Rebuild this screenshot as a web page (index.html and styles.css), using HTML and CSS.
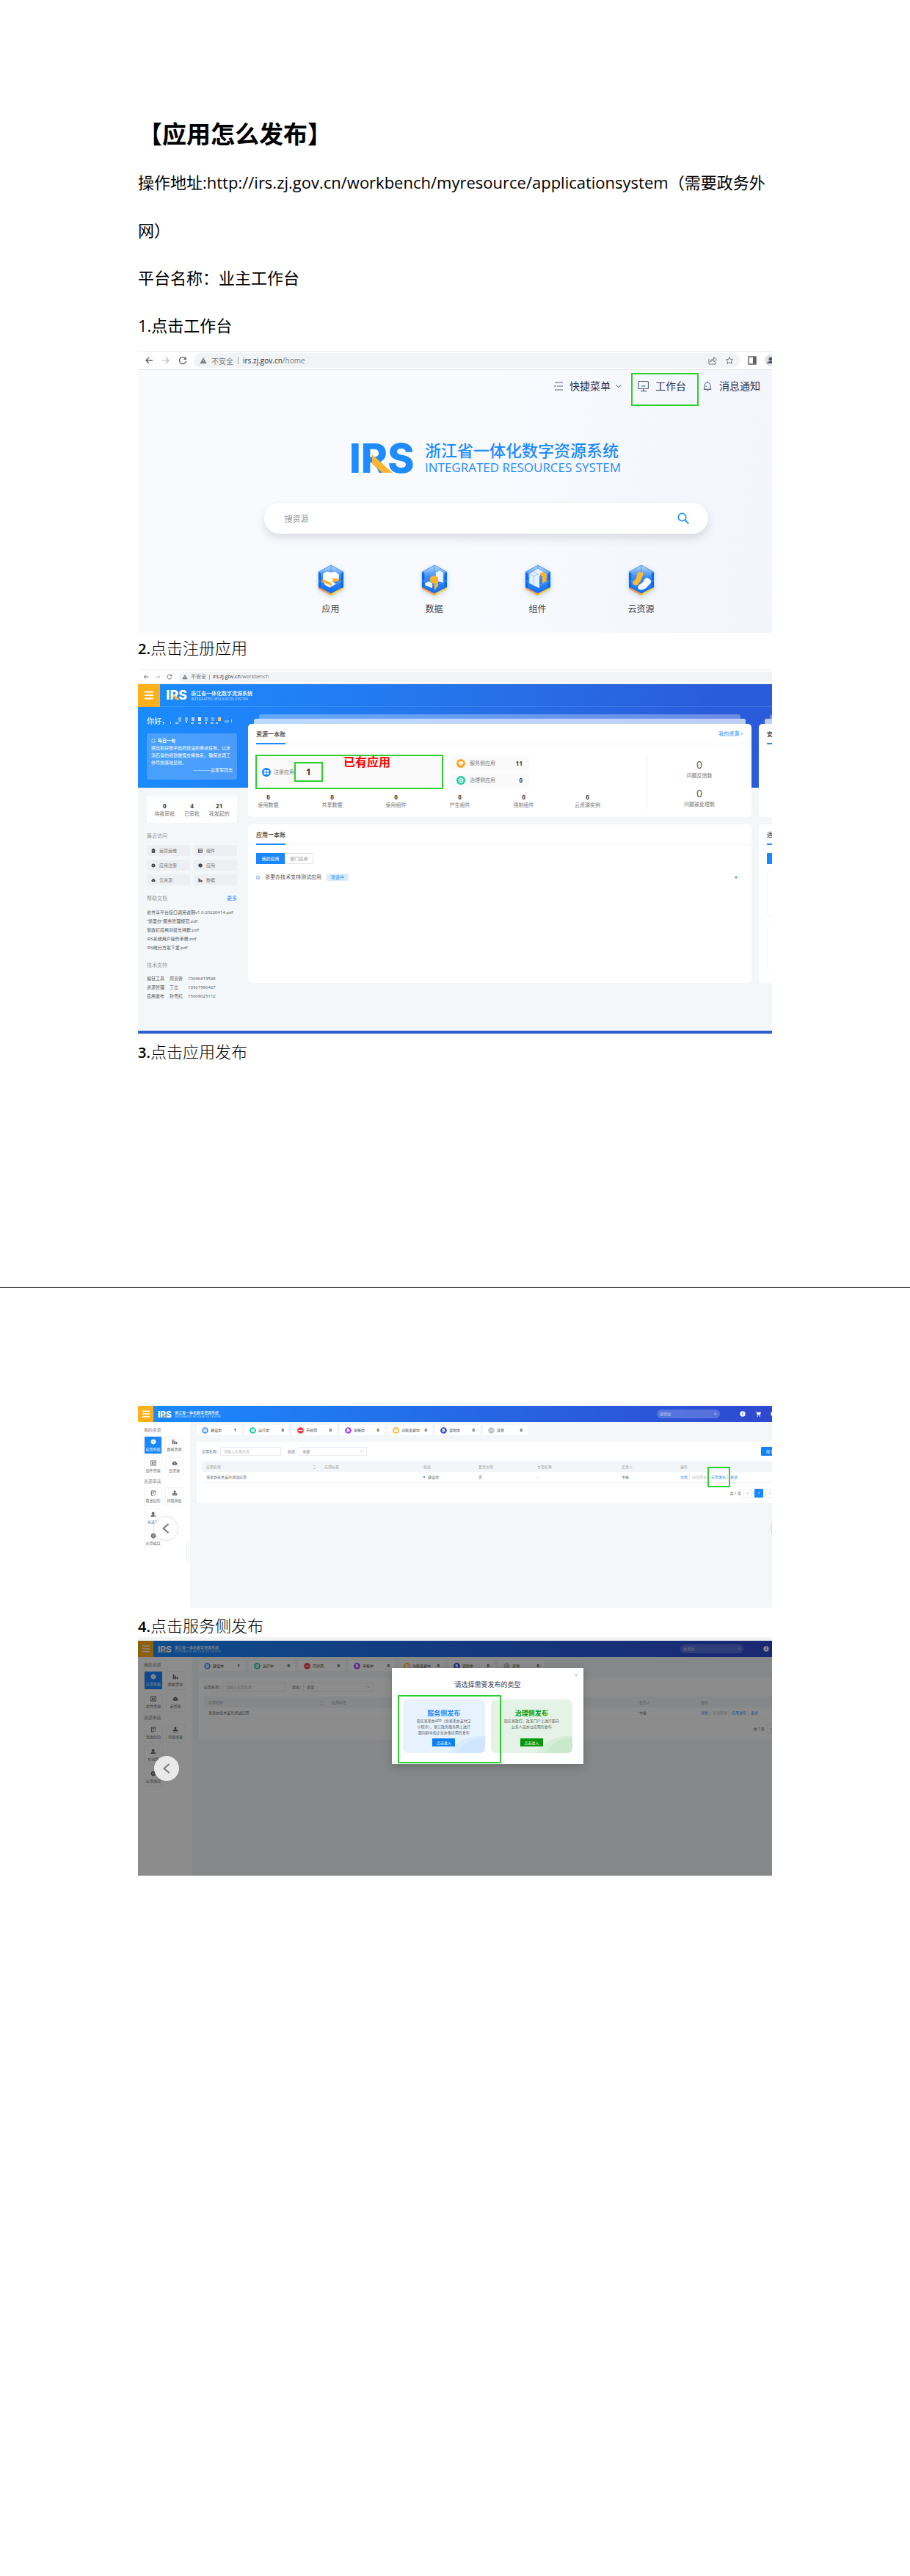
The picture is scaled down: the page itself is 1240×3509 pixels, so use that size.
FILE: index.html
```html
<!DOCTYPE html>
<html lang="zh-CN">
<head>
<meta charset="utf-8">
<title>应用怎么发布</title>
<link rel="stylesheet" href="styles.css">
</head>
<body>
<svg class="defs" aria-hidden="true">
  <symbol id="irs" viewBox="0 0 90 42">
    <text x="-2" y="41" font-family="Inter, sans-serif" font-weight="800" font-size="55" fill="currentColor">IRS</text>
    <path d="M29 16L57 41H43L29 29Z" fill="#ffb52e"/>
  </symbol>
  <symbol id="back" viewBox="0 0 12 12"><path d="M11 6H2M6 2L2 6l4 4" fill="none" stroke="currentColor" stroke-width="1.4"/></symbol>
  <symbol id="fwd" viewBox="0 0 12 12"><path d="M1 6h9M6 2l4 4-4 4" fill="none" stroke="currentColor" stroke-width="1.2"/></symbol>
  <symbol id="reload" viewBox="0 0 12 12"><path d="M10 3.5A4.6 4.6 0 1 0 10.6 7" fill="none" stroke="currentColor" stroke-width="1.4"/><path d="M11 1v4H7z" fill="currentColor"/></symbol>
  <symbol id="warn" viewBox="0 0 12 12"><path d="M6 1l5.5 10H.5z" fill="currentColor"/><path d="M6 4.5v3M6 8.6v1" stroke="#fff"/></symbol>
  <symbol id="search" viewBox="0 0 16 16"><circle cx="6.5" cy="6.5" r="5.2" fill="none" stroke="currentColor" stroke-width="1.6"/><path d="M10.4 10.4L15.4 15.4" stroke="currentColor" stroke-width="1.8"/></symbol>
  <symbol id="burger" viewBox="0 0 12 12"><path d="M0 1.5h12M0 6h12M0 10.500h12" stroke="#fff" stroke-width="1.800"/></symbol>
  <symbol id="cube" viewBox="0 0 12 12"><path d="M6 .5l5 2.6v5.600L6 11.500 1 8.700V3.100z" fill="currentColor"/><path d="M2.500 4L6 6l3.500-2M6 6v4" fill="none" stroke="#9bb" stroke-width=".9"/></symbol>
  <symbol id="bars" viewBox="0 0 12 12"><path d="M1 1h2.600v10H1zM4.700 4h2.600v7H4.700zM8.400 6H11v5H8.400z" fill="currentColor"/></symbol>
  <symbol id="comp" viewBox="0 0 12 12"><rect x="1" y="1.500" width="10" height="9" fill="none" stroke="currentColor" stroke-width="1.400"/><path d="M3 4h2.500v4.500H3zM7 4h2v2H7zM7 7h2v1.500H7z" fill="currentColor"/></symbol>
  <symbol id="cloud" viewBox="0 0 12 12"><path d="M3 10a2.600 2.600 0 0 1-.4-5.100 3.500 3.500 0 0 1 6.800 0A2.600 2.600 0 0 1 9 10z" fill="currentColor"/><path d="M6 5.500v3M4.800 7L6 5.500 7.200 7" fill="none" stroke="#fff" stroke-width=".8"/></symbol>
  <symbol id="note" viewBox="0 0 12 12"><path d="M10 6V1.500H2v9h4" fill="none" stroke="currentColor" stroke-width="1.500"/><path d="M4 4h4M4 6.500h3M6.500 9l1.500 1.500L11 7" fill="none" stroke="currentColor" stroke-width="1.200"/></symbol>
  <symbol id="stamp" viewBox="0 0 12 12"><path d="M6 .5a2.300 2.300 0 0 1 1.400 4V6.500H11V9H1V6.500h3.600v-2A2.300 2.300 0 0 1 6 .5zM1 10h10v1.300H1z" fill="currentColor"/></symbol>
  <symbol id="user" viewBox="0 0 12 12"><circle cx="5.500" cy="3.500" r="2.800" fill="currentColor"/><path d="M.5 10.500C1 7.500 3 6.500 5.500 6.500c2 0 3 .7 3 1.500v2.500z" fill="currentColor"/><path d="M9 8.500h2.500M9 10.500h2.500" stroke="currentColor"/></symbol>
  <symbol id="gear" viewBox="0 0 12 12"><path d="M6 .5l4.800 2.800v5.400L6 11.500 1.200 8.700V3.300z" fill="currentColor"/><circle cx="6" cy="6" r="2" fill="none" stroke="#ddd"/></symbol>
  <symbol id="clip" viewBox="0 0 12 12"><path d="M1.500 1.500h9v10h-9z" fill="currentColor"/><path d="M4 0h4v2.500H4z" fill="currentColor"/><path d="M3.500 5h5M3.500 8h5" stroke="#eee"/></symbol>
  <symbol id="info" viewBox="0 0 12 12"><circle cx="6" cy="6" r="5.500" fill="#fff"/><path d="M6 5v4M6 2.600v1.400" stroke="#2b55d3" stroke-width="1.600"/></symbol>
  <symbol id="cart" viewBox="0 0 12 12"><path d="M0 1h2.500l.5 1.500h9L10.500 7.500H4L2 2z" fill="#fff"/><path d="M3.500 9h7" stroke="#fff"/><circle cx="4.800" cy="10.800" r="1" fill="#fff"/><circle cx="9.500" cy="10.800" r="1" fill="#fff"/></symbol>
  <symbol id="left" viewBox="0 0 12 12"><path d="M9 .8L3 6l6 5.200" fill="none" stroke="currentColor" stroke-width="1.700"/></symbol>
  <symbol id="down" viewBox="0 0 12 12"><path d="M1 3.500l5 5 5-5" fill="none" stroke="currentColor" stroke-width="1.300"/></symbol>
  <symbol id="d-doc" viewBox="0 0 12 12"><circle cx="6" cy="6" r="5.800" fill="currentColor"/><rect x="3" y="3" width="6" height="6" rx="1" fill="#fff"/><path d="M4.300 5h3.400M4.300 7h3.400" stroke="currentColor" stroke-width=".7"/></symbol>
  <symbol id="d-minus" viewBox="0 0 12 12"><circle cx="6" cy="6" r="5.800" fill="currentColor"/><path d="M2.200 6h7.600" stroke="#fff" stroke-width="1.500"/></symbol>
  <symbol id="d-search" viewBox="0 0 12 12"><circle cx="6" cy="6" r="5.800" fill="currentColor"/><path d="M3.500 2.800h3.500l1.500 3v3h-5z" fill="#fff"/><path d="M5 5.500l3.500 3.500" stroke="currentColor"/></symbol>
  <symbol id="d-clock" viewBox="0 0 12 12"><circle cx="6" cy="6" r="5.800" fill="currentColor"/><circle cx="6" cy="6" r="3.500" fill="#fff"/><path d="M4.500 5L6 6.500 8 5" fill="none" stroke="currentColor"/></symbol>
  <symbol id="d-dots" viewBox="0 0 12 12"><circle cx="6" cy="6" r="5.800" fill="currentColor"/><path d="M2.800 6h1.400M5.300 6h1.400M7.800 6h1.400" stroke="#fff"/></symbol>
  <symbol id="d-grid" viewBox="0 0 12 12"><circle cx="6" cy="6" r="6" fill="currentColor"/><path d="M3.500 3h2v2.500h-3V4zM6.500 3h2l1 1v1.500h-3zM2.500 6.500h3V9h-2l-1-1zM6.500 6.500h3V8l-1 1h-2z" fill="#fff"/></symbol>
  <symbol id="d-heart" viewBox="0 0 12 12"><circle cx="6" cy="6" r="6" fill="currentColor"/><path d="M6 9.300L2.800 6.200C2 4.500 3.300 2.900 4.700 3.200h2.600c1.400-.3 2.700 1.300 1.900 3z" fill="#fff"/><path d="M4.500 5.500L6 6.800l1.500-1.300" fill="none" stroke="currentColor" stroke-width=".7"/></symbol>
  <symbol id="d-gear" viewBox="0 0 12 12"><circle cx="6" cy="6" r="6" fill="currentColor"/><circle cx="6" cy="6" r="2.900" fill="none" stroke="#fff" stroke-width="1.200"/><path d="M6 3v6M3 6h6" stroke="#fff" stroke-width=".8"/></symbol>
  <linearGradient id="hexfill" x1="0" y1="0" x2="0" y2="1"><stop offset="0" stop-color="#b9d9fb"/><stop offset=".4" stop-color="#3f8ff5"/><stop offset="1" stop-color="#0f6cf5"/></linearGradient>
  <linearGradient id="hexbase" x1="0" x2="1"><stop offset=".4" stop-color="#ff9d3c"/><stop offset=".6" stop-color="#ffd02e"/></linearGradient>
  <symbol id="hex" viewBox="0 0 36 44">
    <path d="M.5 30v4L18 43.500 35.500 34v-4z" fill="url(#hexbase)"/>
    <path d="M18 1l17.500 9.500v21L18 40.500.5 31.500v-21z" fill="url(#hexfill)"/>
    <path d="M.5 10.500v21L4 33V12zM35.500 10.500v21L32 33V12z" fill="#0b68ef"/>
    <path d="M18 1v10M.5 10.500L18 1l17.500 9.500" fill="none" stroke="#4a96f3"/>
    <path d="M0 22l18 8 18-8" fill="none" stroke="#8bc0ff" stroke-width=".6"/>
  </symbol>
</svg>

<main>
<section class="sheet sheet-one">
  <h1>【应用怎么发布】</h1>
  <p>操作地址:http://irs.zj.gov.cn/workbench/myresource/applicationsystem（需要政务外网）</p>
  <p>平台名称：业主工作台</p>
  <p>1.点击工作台</p>

  <div class="shot home">
    <div class="bar">
      <svg class="i12"><use href="#back"/></svg>
      <svg class="i12 dim"><use href="#fwd"/></svg>
      <svg class="i12"><use href="#reload"/></svg>
      <div class="addr"><svg class="i10"><use href="#warn"/></svg><span>不安全</span><i></i><span><b>irs.zj.gov.cn</b>/home</span>
        <svg class="i12 share" viewBox="0 0 12 12"><path d="M1 4v7h9V8M3 8c0-3 2-4 5-4V1.500L11.500 5 8 8V6C6 6 4 6.500 3 8z" fill="none" stroke="currentColor"/></svg>
        <svg class="i12" viewBox="0 0 12 12"><path d="M6 1.300l1.400 3.200 3.500.3-2.600 2.300.8 3.400L6 8.700l-3.100 1.800.8-3.400L1.100 4.800l3.500-.3z" fill="none" stroke="currentColor"/></svg>
      </div>
      <svg class="i12" viewBox="0 0 12 12"><rect x="1" y="1" width="10" height="10" fill="none" stroke="currentColor" stroke-width="1.500"/><path d="M7 1h4v10H7z" fill="currentColor"/></svg>
      <svg class="i16 avatar" viewBox="0 0 16 16"><circle cx="8" cy="8" r="8" fill="#dfe2e8"/><circle cx="8" cy="6" r="2.500" fill="#4a5368"/><path d="M3 12c0-4 10-4 10 0z" fill="#4a5368"/></svg>
    </div>
    <div class="home-body">
      <nav class="home-nav">
        <a href="#"><svg class="i12" viewBox="0 0 12 12"><path d="M1 1h11M4 6h8M1 11h11" stroke="#5b6389" fill="none"/><path d="M0 6h3" stroke="#1e8bff" stroke-width="1.300"/></svg>快捷菜单<svg class="i8 more"><use href="#down"/></svg></a>
        <a href="#" class="marked"><svg class="i16" viewBox="0 0 16 16"><rect x="1" y="1.500" width="13.500" height="10" rx="1" fill="none" stroke="#5b6389" stroke-width="1.200"/><path d="M5 8h5.500" stroke="#1e8bff" stroke-width="1.300"/><path d="M8 11.500v3M4 14.700h8" stroke="#5b6389" stroke-width="1.200"/></svg>工作台</a>
        <a href="#"><svg class="i14" viewBox="0 0 14 16"><path d="M1 13h12M2.500 13V7a4.500 4.500 0 0 1 9 0v6M7 2.500V.5M5.500 15.200h3" fill="none" stroke="#5b6389" stroke-width="1.200"/><path d="M5 9V7" stroke="#1e8bff" stroke-width="1.300"/></svg>消息通知</a>
      </nav>
      <div class="home-center">
      <div class="brand">
        <svg class="brand-mark"><use href="#irs"/></svg>
        <div><strong>浙江省一体化数字资源系统</strong><span>INTEGRATED RESOURCES SYSTEM</span></div>
      </div>
      <form class="home-search"><input type="text" aria-label="搜资源" placeholder="搜资源"><button type="button" aria-label="搜索"><svg class="i16"><use href="#search"/></svg></button></form>
      <div class="hexes">
        <a href="#"><svg viewBox="0 0 36 44"><use href="#hex"/><path d="M7 13l5-3 6 1 6-1 5 4v7l-8 3 4 3-9 5-7-4-2-7z" fill="#fff"/><path d="M6 20l13 6v4L6 24zM20 19l9 1v3l-9 2z" fill="#ffb32b"/></svg>应用</a>
        <a href="#"><svg viewBox="0 0 36 44"><use href="#hex"/><path d="M20 11l5-2.500 5 2.500v14l-10-2zM5 26l5-2.500 5 2.500v7l-10-4z" fill="#eaf4ff"/><path d="M12 18l5.500-3 5.500 3v12l-5 6v-9l-6-3z" fill="#ffb32b"/></svg>数据</a>
        <a href="#"><svg viewBox="0 0 36 44"><use href="#hex"/><path d="M6 13l12-7 7 4-5 6v17l-14-7z" fill="#e6f1ff"/><path d="M12 10l7 4M12 16v14M6 13l7 3 6-3" stroke="#9cc8fb" fill="none"/><path d="M20 13l5-3 5 3v10l-6 3v-9z" fill="#ffb32b"/></svg>组件</a>
        <a href="#"><svg viewBox="0 0 36 44"><use href="#hex"/><path d="M6 27c0-6 4-4 5-9 1-7 4-9 6-7 4-2 4 3 2 7-2 3-1 5-4 7-2 5-6 5-9 2z" fill="#ffb82f"/><path d="M13 32c0-4 6-5 8-9 2-5 6-6 7-3 5 1 4 6 1 8-4 4-6 7-10 7-3 1-6-1-6-3z" fill="#f6faff"/></svg>云资源</a>
      </div>
      </div>
    </div>
  </div>

  <h2 class="near"><b>2.</b>点击注册应用</h2>

  <div class="shot bench">
    <div class="bar small">
      <svg class="i8"><use href="#back"/></svg>
      <svg class="i8 dim"><use href="#fwd"/></svg>
      <svg class="i8"><use href="#reload"/></svg>
      <div class="addr"><svg class="i8"><use href="#warn"/></svg><span>不安全</span><i></i><span><b>irs.zj.gov.cn</b>/workbench</span></div>
    </div>
    <div class="bench-body">
      <header class="bench-head"><button type="button" aria-label="菜单"><svg class="i12"><use href="#burger"/></svg></button>
        <svg class="mark"><use href="#irs"/></svg><div class="head-name"><strong>浙江省一体化数字资源系统</strong><span>INTEGRATED RESOURCES SYSTEM</span></div></header>
      <div class="bench-cols">
        <aside>
          <div class="hello">你好，
            <svg viewBox="0 0 88 12"><g fill="#a9d0fd"><path d="M2 7h1v3H2zM9 8h4v2H9zM23 6h2v3h-2zM30 8h4v2h-4zM40 8h4v2h-4zM50 7h2v3h-2zM57 8h4v2h-4zM64 8h3v2h-3zM85 4h1v4h-1z"/></g><path d="M13 1h4v6h-4zM22 1h4v5h-4zM49 1h4v5h-4z" fill="#7db8fb"/><path d="M31 1h4v5h-4z" fill="#c8bcf5"/><path d="M40 1h4v5h-4z" fill="#dceffd"/><path d="M58 1h4v5h-4z" fill="#7ba3f5"/><path d="M67 1h4v5h-4z" fill="#d6c88a"/><path d="M76 5h6v4h-6z" fill="#5aa7fb"/></svg></div>
          <div class="quote"><h4><svg class="i6" viewBox="0 0 12 12"><path d="M1 6c1 6 9 6 10 0M3 1v3M9 1v3" fill="none" stroke="#fff" stroke-width="1.500"/></svg>每日一句</h4>
            <p>突出抓好数字政府建设的重点任务、以水滴石穿的韧劲做强支撑体系，确保这项工作尽快落地见效。</p><p class="by">————袁家军同志</p></div>
          <div class="trio"><div><b>0</b>待我审批</div><div><b>4</b>已审批</div><div><b>21</b>我发起的</div></div>
          <h3>最近访问</h3>
          <div class="recent">
            <a href="#"><svg class="i6"><use href="#clip"/></svg>运营运维</a><a href="#"><svg class="i6"><use href="#comp"/></svg>组件</a>
            <a href="#"><svg class="i6"><use href="#gear"/></svg>应用注册</a><a href="#"><svg class="i6"><use href="#cube"/></svg>应用</a>
            <a href="#"><svg class="i6"><use href="#cloud"/></svg>云资源</a><a href="#"><svg class="i6"><use href="#bars"/></svg>数据</a>
          </div>
          <h3>帮助文档<a href="#">更多</a></h3>
          <ul><li>省共享平台接口调用说明v1.0-20220414.pdf</li><li>“浙里办”服务管理规范.pdf</li><li>浙政钉应用对接支持群.pdf</li><li>IRS系统用户操作手册.pdf</li><li>IRS统分方案下发.pdf</li></ul>
          <h3>技术支持</h3>
          <table class="people"><tr><td>编目工具</td><td>周壹锋</td><td>13646614528</td></tr><tr><td>资源管理</td><td>丁立</td><td>13567586427</td></tr><tr><td>应用发布</td><td>孙雪红</td><td>15669025112</td></tr></table>
        </aside>
        <div class="ledger">
          <section class="card assets stacked">
            <div class="card-head"><h3>资源一本账</h3><a href="#">我的资源 &gt;</a></div>
            <div class="assets-body">
              <div class="assets-main">
                <div class="tops">
                  <div class="reg"><svg class="i12 c-blue"><use href="#d-grid"/></svg>注册应用<span class="one">1</span><strong class="callout">已有应用</strong></div>
                  <div class="sides"><div><svg class="i12 c-orange"><use href="#d-heart"/></svg>服务侧应用<b>11</b></div><div><svg class="i12 c-green"><use href="#d-gear"/></svg>治理侧应用<b>0</b></div></div>
                </div>
                <div class="counts"><div><b>0</b>使用数据</div><div><b>0</b>共享数据</div><div><b>0</b>使用组件</div><div><b>0</b>产生组件</div><div><b>0</b>强制组件</div><div><b>0</b>云资源实例</div></div>
              </div>
              <div class="issues"><div><b>0</b>问题反馈数</div><div><b>0</b>问题被处理数</div></div>
            </div>
          </section>
          <section class="card apps">
            <div class="card-head"><h3>应用一本账</h3></div>
            <div class="tabs"><button type="button" class="on">我的应用</button><button type="button">部门应用</button></div>
            <div class="app-row"><i class="ring"></i>浙里办技术支持测试应用<span class="tag">建设中</span><i class="caret"></i></div>
          </section>
        </div>
        <div class="ledger edge">
          <section class="card assets stacked"><div class="card-head"><h3>安全</h3></div></section>
          <section class="card apps"><div class="card-head"><h3>运维</h3></div><div class="tabs"><button type="button" class="on" aria-label="运维"></button></div><div class="ghost"></div><div class="ghost"></div></section>
        </div>
      </div>
    </div>
  </div>

  <h2><b>3.</b>点击应用发布</h2>
</section>

<section class="sheet sheet-two">
  <div class="shot sys">
    <div class="strip"></div>
    <header class="sys-head"><button type="button" aria-label="菜单"><svg class="i10"><use href="#burger"/></svg></button>
      <svg class="mark"><use href="#irs"/></svg><div class="head-name"><strong>浙江省一体化数字资源系统</strong><span>INTEGRATED RESOURCES SYSTEM</span></div>
      <div class="pill"><input type="text" aria-label="搜资源" placeholder="搜资源"><svg class="i4"><use href="#search"/></svg></div>
      <div class="tools"><svg class="i8"><use href="#info"/></svg><svg class="i8"><use href="#cart"/></svg><svg class="i8"><use href="#info"/></svg></div></header>
    <div class="sys-body">
      <aside>
        <h3>我的资源</h3>
        <div class="tiles"><a href="#" class="on"><svg class="i8"><use href="#cube"/></svg>应用系统</a><a href="#"><svg class="i8"><use href="#bars"/></svg>数据资源</a><a href="#"><svg class="i8"><use href="#comp"/></svg>组件资源</a><a href="#"><svg class="i8"><use href="#cloud"/></svg>云资源</a></div>
        <h3>资源申请</h3>
        <div class="tiles"><a href="#"><svg class="i8"><use href="#note"/></svg>我发起的</a><a href="#"><svg class="i8"><use href="#stamp"/></svg>待我审批</a><a href="#" class="solo"><svg class="i8"><use href="#user"/></svg>抄送我</a><a href="#" class="solo"><svg class="i8"><use href="#gear"/></svg>应用编目</a></div>
        <button type="button" class="fold" aria-label="收起"></button>
      </aside>
      <div class="sys-main">
        <div class="chips">
          <div><svg class="dot c-sky"><use href="#d-doc"/></svg>建设中<b>1</b></div><div><svg class="dot c-green"><use href="#d-doc"/></svg>运行中<b>0</b></div><div><svg class="dot c-red"><use href="#d-minus"/></svg>已停用<b>0</b></div><div><svg class="dot c-purple"><use href="#d-search"/></svg>申报中<b>0</b></div><div><svg class="dot c-amber"><use href="#d-clock"/></svg>功能变更中<b>0</b></div><div><svg class="dot c-navy"><use href="#d-search"/></svg>谋划中<b>0</b></div><div><svg class="dot c-grey"><use href="#d-dots"/></svg>其他<b>0</b></div>
        </div>
        <div class="panel">
          <form class="filters"><label for="n1">应用名称：</label><input id="n1" type="text" placeholder="请输入应用名称"><label for="s1">状态：</label><span class="sel"><select id="s1"><option>全部</option></select><svg class="i4"><use href="#down"/></svg></span><button type="button">搜 索</button></form>
          <table>
            <thead><tr><th class="k1">应用名称<i class="sort"></i></th><th class="k2">应用标签</th><th class="k3">状态</th><th class="k4">是否立项</th><th class="k5">立项名称</th><th class="k6">负责人</th><th>操作</th></tr></thead>
            <tbody><tr><td>浙里办技术支持测试应用</td><td></td><td><i class="bullet"></i>建设中</td><td>否</td><td>-</td><td>卞振</td><td><span class="ops"><a href="#">详情</a><span>申请资源</span><a href="#" class="marked">应用发布</a><a href="#">更多</a></span></td></tr></tbody>
          </table>
          <div class="pager"><span>共 1 条</span><button type="button">&lt;</button><button type="button" class="on">1</button><button type="button">&gt;</button></div>
        </div>
      </div>
    </div>
    <button type="button" class="prev" aria-label="上一张"><svg class="i14"><use href="#left"/></svg></button>
    <span class="next-edge"></span>
  </div>

  <h2><b>4.</b>点击服务侧发布</h2>

  <div class="shot sys large">
    <div class="strip"></div>
    <header class="sys-head"><button type="button" aria-label="菜单"><svg class="i10"><use href="#burger"/></svg></button>
      <svg class="mark"><use href="#irs"/></svg><div class="head-name"><strong>浙江省一体化数字资源系统</strong><span>INTEGRATED RESOURCES SYSTEM</span></div>
      <div class="pill"><input type="text" aria-label="搜资源" placeholder="搜资源"><svg class="i4"><use href="#search"/></svg></div>
      <div class="tools"><svg class="i8"><use href="#info"/></svg></div></header>
    <div class="sys-body">
      <aside>
        <h3>我的资源</h3>
        <div class="tiles"><a href="#" class="on"><svg class="i8"><use href="#cube"/></svg>应用系统</a><a href="#"><svg class="i8"><use href="#bars"/></svg>数据资源</a><a href="#"><svg class="i8"><use href="#comp"/></svg>组件资源</a><a href="#"><svg class="i8"><use href="#cloud"/></svg>云资源</a></div>
        <h3>资源申请</h3>
        <div class="tiles"><a href="#"><svg class="i8"><use href="#note"/></svg>我发起的</a><a href="#"><svg class="i8"><use href="#stamp"/></svg>待我审批</a><a href="#" class="solo"><svg class="i8"><use href="#user"/></svg>抄送我</a><a href="#" class="solo"><svg class="i8"><use href="#gear"/></svg>应用编目</a></div>
      </aside>
      <div class="sys-main">
        <div class="chips">
          <div><svg class="dot c-sky"><use href="#d-doc"/></svg>建设中<b>1</b></div><div><svg class="dot c-green"><use href="#d-doc"/></svg>运行中<b>0</b></div><div><svg class="dot c-red"><use href="#d-minus"/></svg>已停用<b>0</b></div><div><svg class="dot c-purple"><use href="#d-search"/></svg>申报中<b>0</b></div><div><svg class="dot c-amber"><use href="#d-clock"/></svg>功能变更中<b>0</b></div><div><svg class="dot c-navy"><use href="#d-search"/></svg>谋划中<b>0</b></div><div><svg class="dot c-grey"><use href="#d-dots"/></svg>其他<b>0</b></div>
        </div>
        <div class="panel">
          <form class="filters"><label for="n2">应用名称：</label><input id="n2" type="text" placeholder="请输入应用名称"><label for="s2">状态：</label><span class="sel"><select id="s2"><option>全部</option></select><svg class="i4"><use href="#down"/></svg></span></form>
          <table>
            <thead><tr><th class="k1">应用名称<i class="sort"></i></th><th class="k2">应用标签</th><th class="k3"></th><th class="k4"></th><th class="k5"></th><th class="k6">负责人</th><th>操作</th></tr></thead>
            <tbody><tr><td>浙里办技术支持测试应用</td><td></td><td></td><td></td><td></td><td>卞振</td><td><span class="ops"><a href="#">详情</a><span>申请资源</span><a href="#">应用发布</a><a href="#">更多</a></span></td></tr></tbody>
          </table>
          <div class="pager"><span>共 1 条</span><button type="button">&lt;</button></div>
        </div>
      </div>
    </div>
    <div class="mask"></div>
    <div class="modal" role="dialog" aria-label="请选择需要发布的类型">
      <button type="button" class="close" aria-label="关闭"><svg class="i4" viewBox="0 0 12 12"><path d="M1 1l10 10M11 1L1 11" stroke="#999" stroke-width="2"/></svg></button>
      <h3>请选择需要发布的类型</h3>
      <div class="choices">
        <div class="choice blue"><h4>服务侧发布</h4><p>指在浙里办APP（含浙里办支付宝<br>小程序）、浙江政务服务网上进行<br>面向群众和企业办事应用的发布</p><button type="button">点击进入</button></div>
        <div class="choice green"><h4>治理侧发布</h4><p>指在浙政钉、改革门户上进行面向<br>公务人员办公应用的发布</p><button type="button">点击进入</button></div>
      </div>
    </div>
    <button type="button" class="prev" aria-label="上一张"><svg class="i14"><use href="#left"/></svg></button>
  </div>
</section>
</main>
</body>
</html>
```
FILE: styles.css
```css
* { box-sizing: border-box; }
body { margin: 0; background: #fff; color: #000; font-family: "Open Sans", "Noto Sans CJK SC", sans-serif; }
h1, h2, h3, h4, p, ul { margin: 0; padding: 0; font-weight: inherit; }
ul { list-style: none; }
a { color: inherit; text-decoration: none; }
button, input, select { font: inherit; color: inherit; border: 0; padding: 0; margin: 0; background: none; min-width: 0; }
svg { display: block; flex: none; overflow: visible; }
.defs { position: absolute; width: 0; height: 0; }
.i4 { width: 4px; height: 4px; }
.i6 { width: 6px; height: 6px; }
.i8 { width: 8px; height: 8px; }
.i10 { width: 10px; height: 10px; }
.i12 { width: 12px; height: 12px; }
.i14 { width: 14px; height: 14px; }
.i16 { width: 16px; height: 16px; }
.c-blue { color: #0f82ff; }
.c-sky { color: #4096f7; }
.c-green { color: #13cf9d; }
.c-orange { color: #ffa41c; }
.c-red { color: #ee3440; }
.c-purple { color: #9a3ff5; }
.c-amber { color: #ffb020; }
.c-navy { color: #2648d8; }
.c-grey { color: #c4c6c9; }

/* Document pages */
.sheet { aspect-ratio: 1240 / 1754; padding: 0 188px; }
.sheet-one { padding-top: 150px; border-bottom: 1px solid #000; }
.sheet-two { padding-top: 158px; }
h1 { font-size: 33px; line-height: 66px; font-weight: 700; }
.sheet > p { font-size: 22px; line-height: 65px; }
h2 { height: 40px; font-size: 22px; line-height: 32px; padding-top: 8px; font-weight: 300; }
h2 b { font-size: 20px; line-height: 20px; font-weight: 600; }
h2.near { height: 45px; padding-top: 4px; }
.shot { position: relative; overflow: hidden; }

/* Browser bar */
.bar { display: flex; align-items: center; gap: 11px; height: 26px; padding-left: 9px; border-top: 1px solid #e9eaec; border-bottom: 1px solid #e4e6e9; color: #5f6368; background: #fff; }
.bar .dim { color: #b5b7ba; }
.addr { flex: 1; display: flex; align-items: center; gap: 6px; height: 20px; margin-left: -2px; padding: 0 8px; border-radius: 10px; background: #f1f3f4; font-size: 10px; color: #777a7e; }
.addr b { font-weight: 400; color: #2b2d30; }
.addr i { width: 1px; height: 10px; background: #aaa; }
.addr .share { margin: 0 5px 0 auto; }
.avatar { margin-right: -6px; }
.bar.small { height: 20px; margin-top: 5px; gap: 8px; padding-left: 7px; }
.small .addr { height: 14px; margin: 0 -10px 0 0; padding: 0 5px; gap: 4px; font-size: 7px; }
.small .addr i { height: 7px; }

/* Home */
.home { margin-top: 2px; }
.home-body { min-height: 358px; background: linear-gradient(100deg, #f8fafe 50%, #f2f5fb); }
.home-nav { display: flex; justify-content: flex-end; gap: 22px; padding: 12px 16px 0 0; color: #2c3050; font-size: 14px; line-height: 20px; }
.home-nav a { display: flex; align-items: center; gap: 9px; }
.home-nav .marked { position: relative; gap: 8px; }
.more { margin-left: -2px; }
.marked::after { content: ""; position: absolute; border: 2px solid #2ed02e; }
.home-nav .marked::after { inset: -8px -17px -17px -9px; }
.home-center { padding-left: 84px; }
.brand { display: flex; justify-content: center; align-items: center; gap: 11px; margin-top: 64px; color: #1e8bff; }
.brand-mark { width: 90px; height: 42px; }
.brand div { display: grid; }
.brand strong { font-size: 22px; line-height: 26px; font-weight: 500; }
.brand span { font-size: 17px; line-height: 22px; }
.home-search { display: flex; align-items: center; max-width: 605px; height: 42px; margin: 37px auto 0; padding: 0 26px 0 28px; border-radius: 21px; background: #fff; box-shadow: 0 6px 12px rgba(60, 70, 90, .16); color: #1e8bff; }
.home-search input { flex: 1; font-size: 11px; outline: 0; }
.home-search ::placeholder { color: #999; opacity: 1; }
.hexes { display: flex; justify-content: center; gap: 81px; margin-top: 42px; }
.hexes a { display: grid; justify-items: center; gap: 8px; width: 60px; font-size: 12px; line-height: 20px; color: #444; }
.hexes svg { width: 36px; height: 43px; filter: drop-shadow(0 2px 3px rgba(30, 110, 245, .25)); }

/* Workbench */
.bench { font-size: 7px; line-height: 10px; color: #777; }
.bench-body { min-height: 476px; border-bottom: 4px solid #2b5fd0; background: linear-gradient(100deg, #1a8cff, #2673ea 50%, #2a5bda 90%) 0 0 / 100% 141px no-repeat #f3f7fa; }
.bench-head, .sys-head { display: flex; align-items: center; color: #fff; }
.bench-head { height: 31px; border-bottom: 1px solid rgba(255, 255, 255, .12); }
.bench-head button { display: grid; place-items: center; width: 30px; height: 31px; margin-right: 9px; background: #ffb01a; }
.mark { width: 29px; height: 14px; }
.head-name { display: grid; margin-left: 4px; }
.head-name strong { font-size: 7px; line-height: 9px; font-weight: 500; }
.head-name span { font-size: 5px; line-height: 6px; opacity: .7; }
.bench-cols { display: flex; align-items: flex-start; gap: 10px; padding-left: 12px; }
.bench aside { width: 123px; margin-right: 5px; padding-top: 10px; flex: none; font-size: 6px; }
.hello { display: flex; align-items: center; height: 18px; color: #fff; font-size: 10px; white-space: nowrap; }
.hello svg { width: 88px; height: 12px; }
.quote { height: 63px; margin-top: 8px; padding: 5px 6px; border-radius: 3px; background: rgba(255, 255, 255, .2); color: #fff; }
.quote h4 { display: flex; gap: 3px; font-size: 6px; font-weight: 600; align-items: center; }
.quote .by { text-align: right; }
.trio { display: flex; justify-content: space-around; height: 36px; margin-top: 23px; padding: 7px 4px; background: #fff; border-radius: 4px; font-size: 7px; text-align: center; }
.trio b, .counts b { display: block; font-size: 8px; line-height: 12px; color: #333; }
.bench aside h3 { display: flex; justify-content: space-between; margin-top: 13px; font-size: 7px; color: #999; }
.bench aside h3 a { color: #1e8bff; }
.recent { display: grid; grid-template-columns: 1fr 1fr; gap: 5px; margin-top: 7px; }
.recent a { display: flex; align-items: center; gap: 5px; height: 15px; padding-left: 6px; background: #eeeff3; border-radius: 2px; }
.recent svg { color: #333; }
.bench aside ul { margin-top: 8px; color: #555; white-space: nowrap; }
.bench li { line-height: 12px; }
.people { margin-top: 7px; border-spacing: 0; color: #555; }
.people td { padding: 0 7px 0 0; line-height: 12px; }
.ledger { flex: 1; min-width: 0; display: grid; gap: 10px; padding-top: 23px; }
.edge { flex: 0 0 18px; }
.edge .card { width: 120px; }
.card { position: relative; background: #fff; border-radius: 5px; }
.stacked::before, .stacked::after { content: ""; position: absolute; height: 7px; background: rgba(255, 255, 255, .7); left: 8px; right: 8px; top: -7px; border-radius: 3px 3px 0 0; }
.stacked::after { left: 15px; right: 15px; top: -13px; height: 6px; background: rgba(255, 255, 255, .3); }
.assets { height: 127px; }
.apps { height: 216px; }
.card-head { display: flex; justify-content: space-between; align-items: center; height: 28px; padding: 0 11px; border-bottom: 1px solid #f3f4f5; color: #1e8bff; }
.card-head h3 { align-self: stretch; font-size: 8px; line-height: 28px; height: 28px; border-bottom: 2px solid #1e8bff; color: #333; white-space: nowrap; font-weight: 500; }
.assets-body { display: flex; height: 99px; }
.assets-main { flex: 1; padding: 14px 0 0 10px; }
.tops { display: flex; gap: 10px; height: 47px; }
.reg { position: relative; display: flex; align-items: center; gap: 4px; width: 256px; padding-left: 7px; border: 2px solid #2ed02e; background: #fafafa; }
.one { display: grid; place-items: center; width: 39px; height: 27px; margin-left: -4px; border: 2px solid #2ed02e; color: #333; font-size: 12px; font-weight: 700; }
.callout { position: absolute; left: 118px; top: 0; font-size: 16px; line-height: 16px; color: #f00; }
.sides { display: grid; gap: 3px; align-content: center; }
.sides div { display: flex; align-items: center; gap: 6px; width: 107px; height: 20px; padding: 0 9px 0 8px; border-radius: 3px; background: #fafafa; }
.sides b { margin-left: auto; font-size: 8px; color: #333; }
.counts { display: flex; margin-top: 5px; margin-left: -26px; }
.counts div { width: 87px; text-align: center; }
.issues { width: 143px; margin: 16px 0 10px; border-left: 1px solid #f0f0f0; text-align: center; display: grid; gap: 9px; align-content: center; }
.issues b { display: block; font-size: 14px; line-height: 20px; font-weight: 400; color: #555; }
.tabs { display: flex; padding: 11px 11px 0; font-size: 6px; }
.tabs button { width: 39px; height: 15px; border: 1px solid #e3e5e8; color: #999; }
.tabs .on { background: #1a86ff; border-color: #1a86ff; color: #fff; }
.app-row { display: flex; align-items: center; gap: 7px; padding: 13px 19px 0 11px; color: #555; }
.ring { width: 5px; height: 5px; border: 1px solid #4aa0ff; border-radius: 50%; }
.tag { padding: 0 6px; border-radius: 2px; background: #dcecff; color: #1e8bff; font-size: 6px; }
.caret { margin-left: auto; border: 2px solid transparent; border-top: 3px solid #1e8bff; border-bottom: 0; }
.ghost { height: 65px; margin: 7px 11px 10px; border: 1px solid #f5f6f8; border-radius: 3px; }

/* Application system list */
.sys { --side: 71px; --tile: 25px; --chip: 61px; --name: 83px; --state: 93px; min-height: 278px; display: flex; flex-direction: column; background: #f3f7fa; font-size: 5px; line-height: 8px; color: #666; }
.large { --side: 74px; --tile: 26px; --chip: 63px; --name: 86px; --state: 96px; min-height: 325px; }
.strip { height: 3px; background: #fff; border-top: 1px solid #eee; }
.large .strip { height: 5px; background: #f1f3f4; border: 0; }
.sys-head { height: 22px; background: linear-gradient(100deg, #1a8cff, #2569e6 50%, #2f49cf); }
.sys-head > button { display: grid; place-items: center; width: 21px; height: 22px; margin-right: 6px; background: #ffb01a; }
.sys .mark { width: 20px; height: 9px; }
.sys .head-name { margin-left: 3px; }
.sys .head-name strong { font-size: 5px; line-height: 6px; }
.sys .head-name span { font-size: 4px; line-height: 5px; }
.pill { display: flex; align-items: center; width: 86px; height: 12px; margin-left: auto; padding: 0 4px; border-radius: 6px; background: rgba(255, 255, 255, .2); }
.pill input { flex: 1; }
.pill ::placeholder { color: #c4d0f5; opacity: 1; }
.tools { display: flex; gap: 13px; margin: 0 -6px 0 27px; }
.large .tools { margin-right: 4px; }
.sys-body { flex: 1; display: flex; }
.sys aside { position: relative; width: var(--side); padding: 7px 8px 0; background: #fff; flex: none; }
.sys aside h3 { color: #888; }
.tiles { display: grid; grid-template-columns: var(--tile) var(--tile); gap: 4px; margin: 4px 0; }
.tiles a { display: grid; justify-items: center; align-content: center; gap: 2px; height: var(--tile); border: 1px solid #f4f5f6; border-radius: 2px; white-space: nowrap; }
.tiles .solo { grid-column: 1; }
.tiles .on { background: #1a86ff; color: #fff; }
.fold { position: absolute; right: 1px; top: 164px; width: 4px; height: 26px; border: 1px solid #eceef0; border-radius: 2px; background: #fff; }
.sys-main { flex: 1; min-width: 0; padding: 4px 0 0 9px; }
.chips { display: flex; gap: 4px; }
.large .chips { gap: 5px; }
.chips div { display: flex; align-items: center; gap: 3px; width: var(--chip); height: 14px; padding: 0 7px; border-radius: 2px; background: #fff; color: #444; white-space: nowrap; }
.chips b { margin-left: auto; font-size: 6px; }
.dot { width: 9px; height: 9px; }
.panel { margin-top: 9px; height: 83px; padding: 7px 0 0 7px; background: #fff; }
.filters { display: flex; align-items: center; height: 12px; }
.filters > input, .sel { height: 12px; padding: 0 4px; border: 1px solid #e9ebee; }
.filters > input { width: var(--name); margin-right: 9px; }
.filters ::placeholder { color: #b5b5b5; opacity: 1; }
.sel { display: flex; align-items: center; width: var(--state); }
.sel select { flex: 1; appearance: none; }
.filters button { height: 12px; margin: 0 -10px 0 auto; padding: 0 7px; background: #0f82ff; color: #fff; border-radius: 1px; }
.panel table { width: 100%; margin-top: 7px; table-layout: fixed; border-spacing: 0; }
.panel th, .panel td { height: 15px; padding: 0 0 0 6px; text-align: left; font-weight: 400; white-space: nowrap; }
.panel th { background: #f3f6f9; color: #999; }
.panel td { border-bottom: 1px solid #f3f4f6; }
.k1 { width: 161px; } .k2 { width: 135px; } .k3 { width: 75px; } .k4 { width: 80px; } .k5 { width: 115px; } .k6 { width: 80px; }
.large .k1 { width: 168px; } .large .k2 { width: 141px; } .large .k3 { width: 78px; } .large .k4 { width: 83px; } .large .k5 { width: 117px; } .large .k6 { width: 84px; }
.sort { float: right; width: 3px; height: 5px; margin: 2px 6px 0 0; border: 1px solid #ccc; border-width: 1px 0; }
.bullet { display: inline-block; width: 2px; height: 2px; margin: 0 4px 1px 0; background: #1e8bff; }
.ops { display: flex; }
.ops > * { color: #1e8bff; position: relative; }
.ops > span { color: #bbb; }
.ops > * + * { margin-left: 2px; padding-left: 3px; border-left: 1px solid #e3e3e3; }
.ops .marked::after { inset: -10px -6px -10px -2px; z-index: 1; }
.pager { display: flex; align-items: center; justify-content: flex-end; gap: 3px; margin: 8px -3px 0 0; }
.pager button { width: 12px; height: 12px; border: 1px solid #e9ebee; border-radius: 1px; line-height: 8px; }
.pager .on { background: #1a86ff; border-color: #1a86ff; color: #fff; }
.prev { position: absolute; left: 21px; top: 153px; width: 34px; height: 34px; display: grid; place-items: center; border: 1px solid #e0e0e0; border-radius: 50%; background: rgba(255, 255, 255, .9); color: #777; }
.next-edge { position: absolute; right: -32px; top: 153px; width: 34px; height: 34px; border: 1px solid #ccc; border-radius: 50%; }
.large .prev { left: 22px; top: 162px; border: 0; background: #e9e9e9; }
.large .sys-main { padding-top: 5px; }
.large .panel { height: 85px; }
.large .pager { margin-right: -5px; }

/* Publish dialog */
.mask { position: absolute; inset: 5px 0 0; background: rgba(0, 0, 0, .45); }
.modal { position: absolute; left: 346px; top: 42px; width: 261px; height: 131px; padding: 16px 15px; background: #fff; box-shadow: 0 3px 12px rgba(0, 0, 0, .2); }
.modal h3 { text-align: center; font-size: 9px; line-height: 14px; color: #3d4457; }
.close { position: absolute; right: 8px; top: 8px; }
.choices { display: flex; gap: 8px; margin-top: 13px; }
.choices::after { content: ""; position: absolute; left: 8px; top: 37px; width: 137px; height: 89px; border: 2px solid #2ed02e; }
.choice { position: relative; overflow: hidden; flex: 1; height: 73px; padding-top: 12px; border-radius: 7px; text-align: center; white-space: nowrap; }
.choice h4 { font-size: 9px; line-height: 13px; font-weight: 700; }
.choice p { height: 28px; color: #555; }
.choice button { position: relative; z-index: 1; display: block; width: 31px; height: 11px; margin: 0 auto; color: #fff; }
.choice::before, .choice::after { content: ""; position: absolute; left: 62px; top: 50px; width: 90px; height: 60px; border-radius: 50%; background: currentColor; opacity: .06; }
.choice::after { left: 74px; }
.blue { background: #e7f2ff; color: #1e8bff; }
.green { background: #e4f3e5; color: #079a0b; }
.blue button { background: #0a80f5; }
.green button { background: #07960c; }
```
